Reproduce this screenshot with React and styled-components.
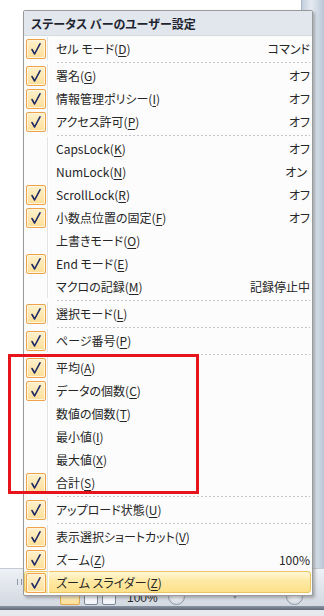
import React from "react";
import styled, { createGlobalStyle } from "styled-components";

const Global = createGlobalStyle`
  html, body { margin: 0; padding: 0; background: #ffffff; }
  body { font-family: "Noto Sans CJK JP", "Noto Sans", sans-serif; }
  #root { width: 324px; height: 616px; overflow: hidden; }
`;

const Screen = styled.div`
  position: relative;
  width: 324px;
  height: 616px;
  display: flex;
  flex-direction: column;
  background: #ffffff;
  overflow: hidden;
`;

const Sheet = styled.div`
  flex: 1;
  display: flex;
  background: #ffffff;
`;

const Cells = styled.div`
  flex: 1;
`;

const ScrollCol = styled.div`
  width: 22px;
  background: linear-gradient(90deg, #c4cfdc 0%, #e4eaf1 40%, #d2dbe6 70%, #b9c6d6 100%);
  border-left: 1px solid #a9b6c6;
`;

const StatusBar = styled.div`
  height: 48px;
  display: flex;
  flex-direction: column;
`;

const StatusMain = styled.div`
  height: 37px;
  display: flex;
  align-items: center;
  gap: 4px;
  padding-left: 17px;
  background: linear-gradient(#eef1f5, #dde2e9 60%, #d3d9e1);
  border-top: 1px solid #c3cad4;
`;

const StatusEdge = styled.div`
  height: 4px;
  background: linear-gradient(#8a94a3, #5f6977);
`;

const StatusFoot = styled.div`
  flex: 1;
  background: #e6e9ee;
`;

const Grip = styled.div`
  width: 3px;
  height: 6px;
  border-left: 1px solid #8d96a3;
  border-right: 1px solid #8d96a3;
  margin-top: -12px;
`;

const ViewBtn = styled.div`
  width: ${(p) => (p.$active ? 18 : 12)}px;
  height: 12px;
  margin-top: 20px;
  margin-left: ${(p) => p.$ml || 0}px;
  border: 1px solid ${(p) => (p.$active ? "#e4a94c" : "#7d8796")};
  background: ${(p) => (p.$active ? "linear-gradient(#fff4cf,#fde09a)" : "#f4f6f9")};
  border-radius: 2px;
`;

const ZoomText = styled.div`
  margin-left: 7px;
  margin-top: 20px;
  font-family: "Liberation Sans", sans-serif;
  font-size: 12px;
  color: #2a2a2a;
`;

const RoundBtn = styled.div`
  width: 15px;
  height: 15px;
  border-radius: 50%;
  margin-top: 18px;
  margin-left: ${(p) => p.$ml}px;
  background: radial-gradient(circle at 50% 35%, #ffffff, #c9d0da);
  border: 1px solid #8f99a8;
`;

const Thumb = styled.div`
  width: 0;
  height: 0;
  margin-top: 16px;
  margin-left: ${(p) => p.$ml}px;
  border-left: 4px solid transparent;
  border-right: 4px solid transparent;
  border-top: 6px solid #8b95a3;
`;

/* ---------- popup menu (overlay) ---------- */

const Menu = styled.div`
  position: absolute;
  left: 23px;
  top: 10px;
  width: 288px;
  background: #fcfcfc;
  border: 1px solid #9a9a9a;
  border-radius: 2px;
  box-shadow: 2px 2px 3px rgba(60, 60, 60, 0.35);
  padding-bottom: 1px;
  font-family: "Noto Sans CJK JP", "Noto Sans", sans-serif;
  font-size: 12px;
  font-feature-settings: "palt";
  color: #262626;
`;

const Header = styled.div`
  height: 25px;
  margin-bottom: 1px;
  display: flex;
  align-items: center;
  padding-left: 7px;
  font-weight: bold;
  color: #1e2530;
  background: #e2e7ed;
  border-bottom: 1px solid #d5dbe2;
  box-sizing: border-box;
`;

const Row = styled.div`
  position: relative;
  height: 23px;
  display: flex;
  align-items: center;
`;

const Highlight = styled.div`
  position: absolute;
  left: 0;
  right: 1px;
  top: 0;
  bottom: 1px;
  border: 1px solid #e9c55f;
  border-radius: 3px;
  background: linear-gradient(#fff7d6 0%, #fee9a4 45%, #fde08a 100%);
`;

const Gutter = styled.div`
  position: relative;
  width: 24px;
  height: 100%;
  flex: none;
  display: flex;
  align-items: center;
  padding-left: 2px;
  box-sizing: border-box;
  border-right: 1px solid #e2e3e3;
  box-shadow: 1px 0 0 #ffffff;
`;

const Check = styled.div`
  width: 20px;
  height: 20px;
  box-sizing: border-box;
  border: 1px solid #eea24c;
  border-radius: 2px;
  background: linear-gradient(#fef1cd, #fddf98);
  box-shadow: inset 0 0 0 1px #fff6dc;
  display: flex;
  align-items: center;
  justify-content: center;
`;

const Label = styled.div`
  position: relative;
  flex: 1;
  padding-left: 8px;
  white-space: nowrap;
`;

const Value = styled.div`
  position: relative;
  padding-right: ${(p) => p.$pr ?? 2}px;
  white-space: nowrap;
`;

const Key = styled.span`
  text-decoration: underline;
  text-underline-offset: 2px;
`;

const Sep = styled.div`
  height: 4px;
  display: flex;
  align-items: center;
  padding-left: 33px;
  padding-right: 2px;
  &::after {
    content: "";
    flex: 1;
    height: 1px;
    background-image: repeating-linear-gradient(90deg, #c4c4cc 0 2px, transparent 2px 4px);
  }
`;

const RedBox = styled.div`
  position: absolute;
  left: 8px;
  top: 354px;
  width: 191px;
  height: 140px;
  box-sizing: border-box;
  border: 3px solid #e8141c;
`;

const CheckMark = () => (
  <svg width="12" height="14" viewBox="0 0 12 14">
    <path d="M2 7.5 L4.6 12 L10 1.8" fill="none" stroke="#1c2a66" strokeWidth="1.6" strokeLinecap="round" strokeLinejoin="round" />
  </svg>
);

const items = [
  { l: "セル モード(", k: "D", c: true, v: "コマンド" },
  "sep",
  { l: "署名(", k: "G", c: true, v: "オフ" },
  { l: "情報管理ポリシー(", k: "I", c: true, v: "オフ" },
  { l: "アクセス許可(", k: "P", c: true, v: "オフ" },
  "sep",
  { l: "CapsLock(", k: "K", v: "オフ" },
  { l: "NumLock(", k: "N", v: "オン", pr: 5 },
  { l: "ScrollLock(", k: "R", c: true, v: "オフ" },
  { l: "小数点位置の固定(", k: "F", c: true, v: "オフ" },
  { l: "上書きモード(", k: "O" },
  { l: "End モード(", k: "E", c: true },
  { l: "マクロの記録(", k: "M", v: "記録停止中" },
  "sep",
  { l: "選択モード(", k: "L", c: true },
  "sep",
  { l: "ページ番号(", k: "P", c: true },
  "sep",
  { l: "平均(", k: "A", c: true },
  { l: "データの個数(", k: "C", c: true },
  { l: "数値の個数(", k: "T" },
  { l: "最小値(", k: "I" },
  { l: "最大値(", k: "X" },
  { l: "合計(", k: "S", c: true },
  "sep",
  { l: "アップロード状態(", k: "U", c: true },
  "sep",
  { l: "表示選択ショートカット(", k: "V", c: true },
  { l: "ズーム(", k: "Z", c: true, v: "100%" },
  { l: "ズーム スライダー(", k: "Z", c: true, hot: true },
];

export default function App() {
  return (
    <>
      <Global />
      <Screen>
        <Sheet>
          <Cells />
          <ScrollCol />
        </Sheet>
        <StatusBar>
          <StatusMain>
            <Grip />
            <ViewBtn $active $ml={34} />
            <ViewBtn />
            <ViewBtn />
            <ZoomText>100%</ZoomText>
            <RoundBtn $ml={6} />
            <Thumb $ml={42} />
            <RoundBtn $ml={43} />
          </StatusMain>
          <StatusEdge />
          <StatusFoot />
        </StatusBar>

        <Menu>
          <Header>ステータス バーのユーザー設定</Header>
          {items.map((it, i) =>
            it === "sep" ? (
              <Sep key={i} />
            ) : (
              <Row key={i}>
                {it.hot && <Highlight />}
                <Gutter>{it.c && <Check><CheckMark /></Check>}</Gutter>
                <Label>
                  {it.l}
                  <Key>{it.k}</Key>)
                </Label>
                {it.v && <Value $pr={it.pr}>{it.v}</Value>}
              </Row>
            )
          )}
        </Menu>
        <RedBox />
      </Screen>
    </>
  );
}
